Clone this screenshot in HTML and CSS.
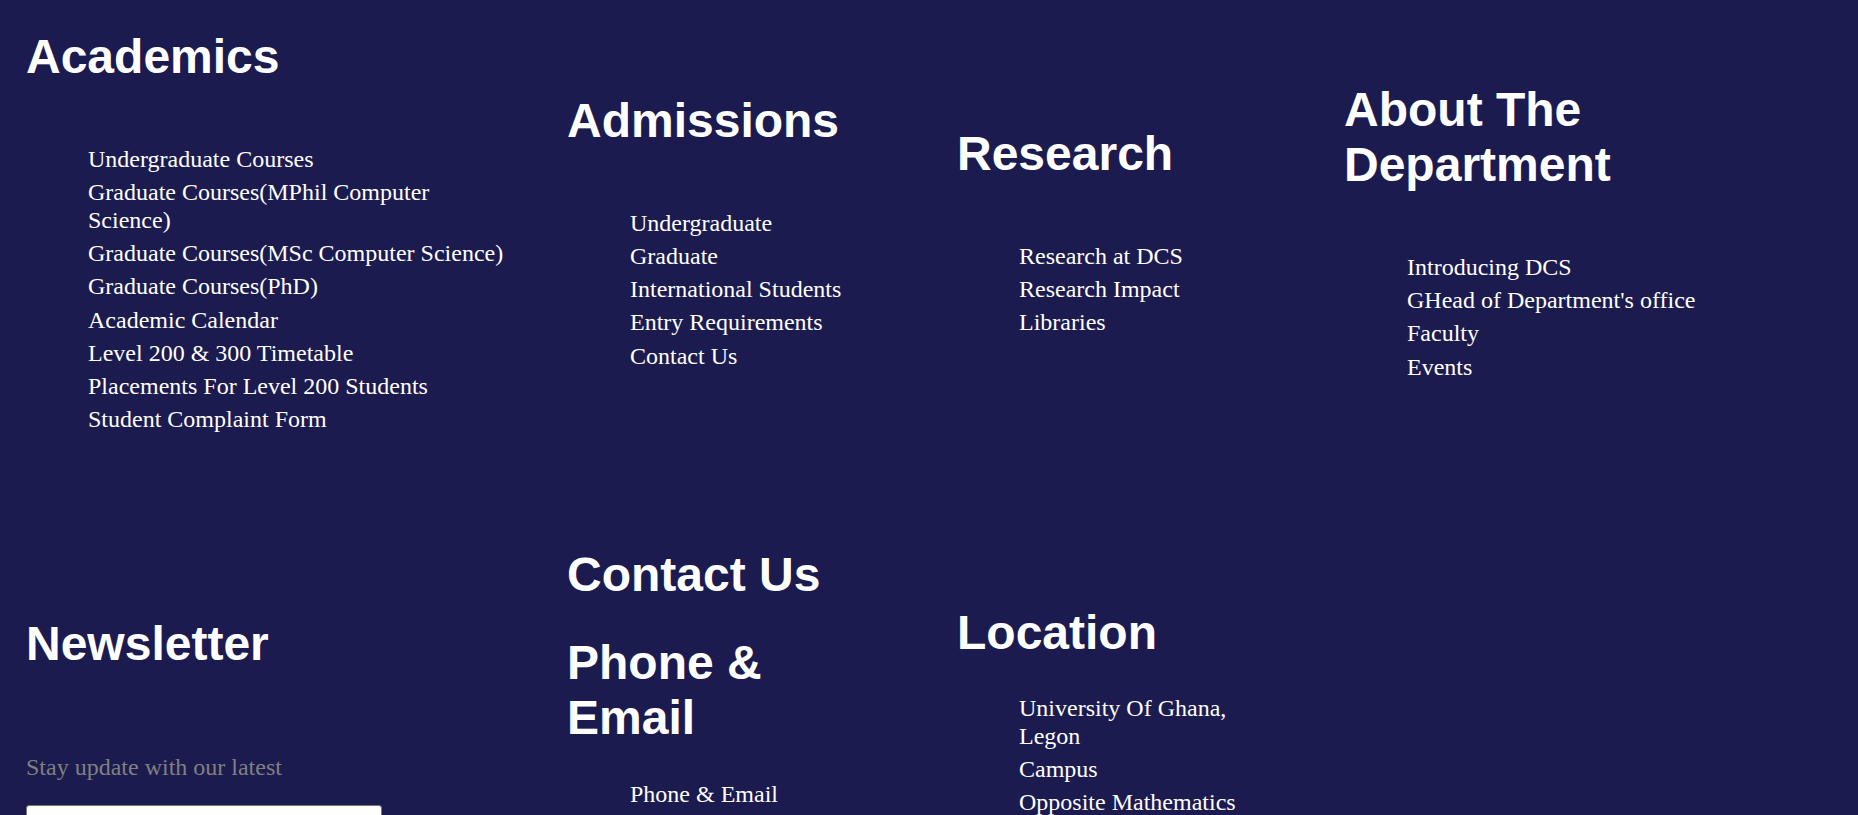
FILE: index.html
```html
<!DOCTYPE html>
<html lang="en">
<head>
<meta charset="utf-8">
<title>Footer</title>
<link rel="stylesheet" href="styles.css">
</head>
<body>
<footer class="footer">
  <div class="row row-top">
    <section class="col col-academics">
      <h2 class="col-title">Academics</h2>
      <ul class="links links-top">
        <li>Undergraduate Courses</li>
        <li>Graduate Courses(MPhil Computer Science)</li>
        <li>Graduate Courses(MSc Computer Science)</li>
        <li>Graduate Courses(PhD)</li>
        <li>Academic Calendar</li>
        <li>Level 200 &amp; 300 Timetable</li>
        <li>Placements For Level 200 Students</li>
        <li>Student Complaint Form</li>
      </ul>
    </section>
    <section class="col col-admissions">
      <h2 class="col-title">Admissions</h2>
      <ul class="links links-top links-wide">
        <li>Undergraduate</li>
        <li>Graduate</li>
        <li>International Students</li>
        <li>Entry Requirements</li>
        <li>Contact Us</li>
      </ul>
    </section>
    <section class="col col-research">
      <h2 class="col-title">Research</h2>
      <ul class="links links-top">
        <li>Research at DCS</li>
        <li>Research Impact</li>
        <li>Libraries</li>
      </ul>
    </section>
    <section class="col col-about">
      <h2 class="col-title">About The Department</h2>
      <ul class="links links-top links-wide">
        <li>Introducing DCS</li>
        <li>GHead of Department's office</li>
        <li>Faculty</li>
        <li>Events</li>
      </ul>
    </section>
  </div>
  <div class="row row-bottom">
    <section class="col col-news">
      <h2 class="col-title">Newsletter</h2>
      <p class="news-text">Stay update with our latest</p>
      <input class="news-input" type="email" aria-label="Email">
    </section>
    <section class="col col-contact">
      <h2 class="col-title">Contact Us</h2>
      <h2 class="col-title col-subtitle">Phone &amp; Email</h2>
      <ul class="links links-bottom links-wide links-phone">
        <li>Phone &amp; Email</li>
      </ul>
    </section>
    <section class="col col-location">
      <h2 class="col-title">Location</h2>
      <ul class="links links-bottom">
        <li>University Of Ghana, Legon</li>
        <li>Campus</li>
        <li>Opposite Mathematics</li>
      </ul>
    </section>
  </div>
</footer>
</body>
</html>
```

FILE: styles.css
```css
html, body {
  margin: 0;
  padding: 0;
  background: #1c1b4f;
}

body {
  font-family: "Liberation Serif", "Times New Roman", serif;
  color: #ffffff;
}

.footer {
  padding: 0 0 0 26px;
}

.row {
  display: grid;
  grid-template-columns: 541px 390px 387px 1fr;
}

.row-top {
  padding-top: 29px;
  align-items: center;
}

.row-bottom {
  align-items: start;
}

.col {
  min-width: 0;
}

.col-title {
  margin: 0;
  font-family: "Liberation Sans", Arial, sans-serif;
  font-weight: 700;
  font-size: 48px;
  line-height: 55.2px;
  color: #ffffff;
}

.links {
  list-style: none;
  margin: 0;
  padding: 0 0 0 62px;
  display: flex;
  flex-direction: column;
  gap: 5.6px;
  font-size: 24px;
  line-height: 27.6px;
}

.links-top {
  margin-top: 62px;
}

.links-wide {
  padding-left: 63px;
}

.links-bottom {
  margin-top: 35px;
}

.links-phone {
  margin-top: 36px;
}

.col-academics {
  max-width: 484px;
}

.col-about {
  padding-right: 26px;
}

/* bottom row */
.col-news {
  margin-top: 182px;
}

.col-contact {
  margin-top: 113px;
  max-width: 290px;
}

.col-subtitle {
  margin-top: 33px;
}

.col-location {
  margin-top: 171px;
  max-width: 302px;
}

.news-text {
  margin: 83px 0 0;
  font-size: 24px;
  line-height: 27.6px;
  color: #808080;
}

.news-input {
  display: block;
  box-sizing: border-box;
  margin-top: 23px;
  width: 356px;
  height: 44px;
  background: #ffffff;
  border: 1px solid #767676;
  border-radius: 3px;
}
```
